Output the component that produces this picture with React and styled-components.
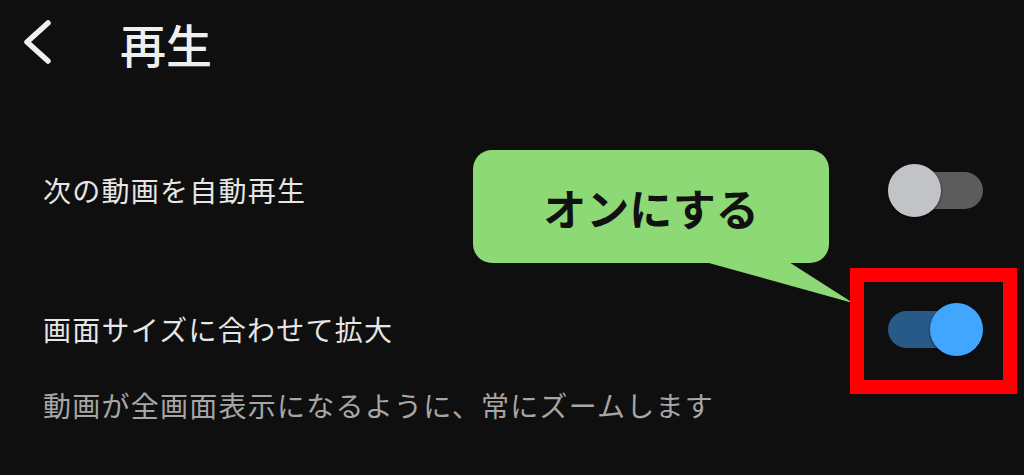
import React from "react";
import styled, { createGlobalStyle } from "styled-components";

const GlobalStyle = createGlobalStyle`
  html, body {
    margin: 0;
    padding: 0;
    background: #0f0f0f;
  }
  body {
    font-family: "Noto Sans CJK JP", "Noto Sans", sans-serif;
  }
`;

const Page = styled.div`
  position: relative;
  width: 1024px;
  height: 475px;
  overflow: hidden;
  background: #0f0f0f;
  color: #e8e8e8;
`;

const Header = styled.header`
  display: flex;
  align-items: center;
  height: 86px;
  padding-left: 20px;
  box-sizing: border-box;
`;

const BackButton = styled.button`
  display: flex;
  align-items: center;
  justify-content: center;
  width: 36px;
  height: 52px;
  padding: 0;
  margin: 0;
  background: none;
  border: none;
  cursor: pointer;
`;

const Title = styled.h1`
  margin: 0 0 0 64px;
  font-size: 46px;
  font-weight: 500;
  line-height: 1;
  color: #efefef;
  letter-spacing: 0;
`;

const List = styled.div`
  display: flex;
  flex-direction: column;
  gap: 79px;
  padding: 74px 41px 0 43px;
`;

const Item = styled.div`
  display: flex;
  flex-direction: column;
`;

const Row = styled.div`
  display: flex;
  align-items: center;
  justify-content: space-between;
  height: 60px;
`;

const Label = styled.span`
  font-size: 28px;
  letter-spacing: 1.25px;
  line-height: 40px;
  color: #e6e6e6;
`;

const Description = styled.p`
  margin: 26px 0 0;
  font-size: 28px;
  letter-spacing: 1.25px;
  line-height: 40px;
  color: #a6a6a6;
`;

const Track = styled.div`
  position: relative;
  width: 95px;
  height: 37px;
  border-radius: 19px;
  background: ${(p) => (p.$on ? "#285a88" : "#5b5c5b")};
`;

const Knob = styled.div`
  position: absolute;
  top: 50%;
  width: 53px;
  height: 53px;
  margin-top: -26.5px;
  border-radius: 50%;
  left: ${(p) => (p.$on ? "42px" : "0px")};
  background: ${(p) => (p.$on ? "#41a6fd" : "#c1c3c7")};
  box-shadow: 0 1px 3px rgba(0, 0, 0, 0.55);
`;

const Bubble = styled.div`
  position: absolute;
  left: 473px;
  top: 150px;
  width: 356px;
  height: 113px;
  border-radius: 19px;
  background: #8dd975;
  display: flex;
  align-items: center;
  justify-content: center;
  font-size: 43px;
  font-weight: 700;
  color: #111111;
  letter-spacing: 0;
`;

const Tail = styled.svg`
  position: absolute;
  left: 670px;
  top: 255px;
  overflow: visible;
`;

const Highlight = styled.div`
  position: absolute;
  left: 850px;
  top: 268px;
  width: 167px;
  height: 126px;
  box-sizing: border-box;
  border: 14px solid #ff0000;
`;

function Toggle({ on }) {
  return (
    <Track $on={on}>
      <Knob $on={on} />
    </Track>
  );
}

export default function App() {
  return (
    <>
      <GlobalStyle />
      <Page>
        <Header>
          <BackButton aria-label="戻る">
            <svg width="36" height="52" viewBox="0 0 36 52">
              <polyline
                points="28,6 7,25 28,44"
                fill="none"
                stroke="#f0f0f0"
                strokeWidth="5.5"
                strokeLinecap="round"
                strokeLinejoin="round"
              />
            </svg>
          </BackButton>
          <Title>再生</Title>
        </Header>
        <List>
          <Item>
            <Row>
              <Label>次の動画を自動再生</Label>
              <Toggle on={false} />
            </Row>
          </Item>
          <Item>
            <Row>
              <Label>画面サイズに合わせて拡大</Label>
              <Toggle on={true} />
            </Row>
            <Description>動画が全画面表示になるように、常にズームします</Description>
          </Item>
        </List>
        <Tail width="190" height="55" viewBox="0 0 190 55">
          <polygon points="10,0 108,0 183,48" fill="#8dd975" />
        </Tail>
        <Bubble>オンにする</Bubble>
        <Highlight />
      </Page>
    </>
  );
}
